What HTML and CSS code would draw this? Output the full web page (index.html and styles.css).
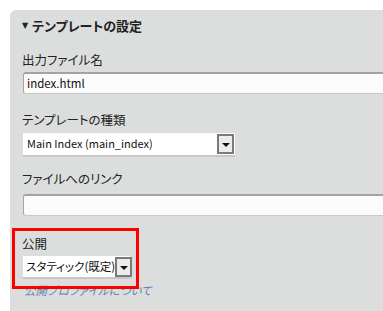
FILE: index.html
```html
<!DOCTYPE html>
<html lang="ja">
<head>
  <meta charset="UTF-8" />
  <title>テンプレートの設定</title>
  <link rel="stylesheet" href="styles.css">
</head>
<body>
  <div class="panel">
    <h2 class="title"><span class="caret">&#9660;</span>テンプレートの設定</h2>

    <div class="field field-name">
      <label class="label">出力ファイル名</label>
      <div class="input">index.html</div>
    </div>

    <div class="field field-type">
      <label class="label">テンプレートの種類</label>
      <div class="select select-wide">
        <span class="select-text">Main Index (main_index)</span>
        <span class="select-btn"><span class="arrow"></span></span>
      </div>
    </div>

    <div class="field field-link">
      <label class="label">ファイルへのリンク</label>
      <div class="input"></div>
    </div>

    <div class="field field-publish">
      <label class="label">公開</label>
      <div class="select select-small">
        <span class="select-text">スタティック(既定)</span>
        <span class="select-btn"><span class="arrow"></span></span>
      </div>
      <a class="help" href="#">公開プロファイルについて</a>
    </div>
  </div>

  <div class="highlight"></div>
</body>
</html>
```

FILE: styles.css
```css
* {
  margin: 0;
  padding: 0;
  box-sizing: border-box;
}
html, body {
  overflow: hidden;
}
body {
  background-color: #fff;
  padding: 10px 0 0 10px;
  font-family: "Noto Sans CJK JP", "Noto Sans", sans-serif;
  font-feature-settings: "palt";
  color: #222;
  font-size: 12px;
  position: relative;
  height: 311px;
}
.panel {
  background-color: #dcdedd;
  border-top-left-radius: 6px;
  width: 373px;
  height: 301px;
  padding: 8px 0 0 12px;
  overflow: hidden;
}
.title {
  height: 16px;
  font-size: 13px;
  font-weight: bold;
  line-height: 16px;
  color: #222;
  display: flex;
  align-items: center;
}
.caret {
  font-family: "DejaVu Sans", sans-serif;
  font-size: 8px;
  margin-right: 4px;
}
.field-name { margin-top: 18px; }
.field-type { margin-top: 18px; }
.field-link { margin-top: 14px; }
.field-publish { margin-top: 20px; }

.label {
  display: block;
  height: 16px;
  line-height: 16px;
  font-size: 12.5px;
  font-weight: normal;
  color: #222;
}
.field-name .label { margin-bottom: 4px; }
.field-type .label { margin-bottom: 5px; }
.field-link .label { margin-bottom: 7px; }
.field-publish .label { margin-bottom: 4px; }

.input {
  margin-left: 1px;
  height: 22px;
  width: 400px;
  background: #fbfbfb;
  border: 1px solid #c9c9c9;
  border-top: 2px solid #a3a3a3;
  border-left: 1px solid #a3a3a3;
  border-radius: 3px 0 0 3px;
  padding: 0 3px;
  font-size: 11.5px;
  line-height: 18px;
  color: #111;
}
.select {
  margin-left: 1px;
  display: flex;
  align-items: flex-start;
  background: #fff;
  border-bottom: 2px solid #c6c8c7;
  padding: 1px 1px 0 0;
}
.select-wide {
  width: 212px;
  height: 24px;
}
.select-small {
  width: 107px;
  height: 23px;
}
.select-text {
  flex: 1;
  height: 18px;
  padding: 0 0 0 4px;
  line-height: 18px;
  font-size: 11px;
  color: #111;
  white-space: nowrap;
}
.select-small .select-text {
  font-size: 11.5px;
  padding-left: 3px;
}
.select-btn {
  flex: none;
  width: 17px;
  height: 20px;
  border: 2px solid #7a7a7a;
  background: #ececec;
  display: flex;
  align-items: center;
  justify-content: center;
}
.arrow {
  width: 0;
  height: 0;
  border-left: 4px solid transparent;
  border-right: 4px solid transparent;
  border-top: 4px solid #111;
  margin-top: 2px;
}
.help {
  display: block;
  height: 16px;
  margin-top: 3px;
  margin-left: 2px;
  font-size: 11.5px;
  line-height: 16px;
  color: #5a86b3;
  font-style: italic;
  text-decoration: none;
}
.highlight {
  position: absolute;
  left: 12px;
  top: 228px;
  width: 127px;
  height: 61px;
  border: 3px solid #ff0000;
}
```
